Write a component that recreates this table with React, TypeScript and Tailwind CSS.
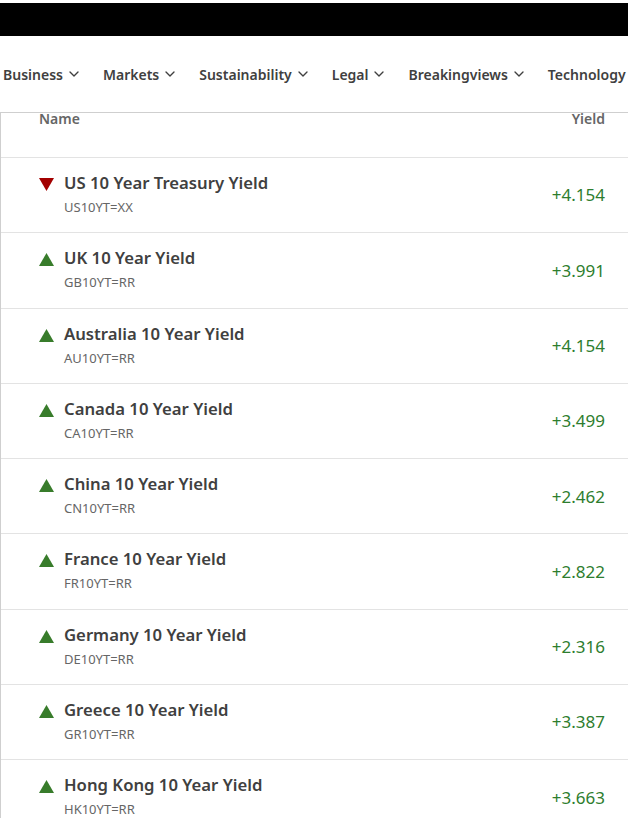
import { ChevronDown } from "lucide-react";

const NAV = ["Business", "Markets", "Sustainability", "Legal", "Breakingviews", "Technology"];

type Row = { name: string; ric: string; yield: string; up: boolean };

const ROWS: Row[] = [
  { name: "US 10 Year Treasury Yield", ric: "US10YT=XX", yield: "+4.154", up: false },
  { name: "UK 10 Year Yield", ric: "GB10YT=RR", yield: "+3.991", up: true },
  { name: "Australia 10 Year Yield", ric: "AU10YT=RR", yield: "+4.154", up: true },
  { name: "Canada 10 Year Yield", ric: "CA10YT=RR", yield: "+3.499", up: true },
  { name: "China 10 Year Yield", ric: "CN10YT=RR", yield: "+2.462", up: true },
  { name: "France 10 Year Yield", ric: "FR10YT=RR", yield: "+2.822", up: true },
  { name: "Germany 10 Year Yield", ric: "DE10YT=RR", yield: "+2.316", up: true },
  { name: "Greece 10 Year Yield", ric: "GR10YT=RR", yield: "+3.387", up: true },
  { name: "Hong Kong 10 Year Yield", ric: "HK10YT=RR", yield: "+3.663", up: true },
];

function Arrow({ up }: { up: boolean }) {
  return (
    <svg width="15" height="13" viewBox="0 0 15 13" className="shrink-0">
      {up ? (
        <polygon points="7.5,0 15,13 0,13" fill="#387c2b" />
      ) : (
        <polygon points="0,0 15,0 7.5,13" fill="#a30000" />
      )}
    </svg>
  );
}

export default function App() {
  return (
    <div
      className="h-[818px] w-[628px] overflow-hidden bg-white text-[#404040]"
      style={{ fontFamily: '"Noto Sans", "Open Sans", sans-serif' }}
    >
      <div className="h-[3px]" />
      <div className="h-[33px] bg-black" />

      <nav className="flex h-[76px] items-center gap-[21px] whitespace-nowrap pl-[3px] text-[14px] font-semibold">
        {NAV.map((n, i) => (
          <span key={n} className="flex items-center gap-[3px]">
            {n}
            {i < NAV.length - 1 && <ChevronDown size={16} strokeWidth={2} />}
          </span>
        ))}
      </nav>

      <div className="border-l border-t border-[#cfcfcf]">
        <div className="flex h-[44px] items-start justify-between pl-[38px] pr-[23px] text-[14px] font-semibold leading-[12px] text-[#666]">
          <span>Name</span>
          <span>Yield</span>
        </div>
        {ROWS.map((r) => (
          <div
            key={r.ric}
            className="flex h-[75.3px] items-center justify-between border-t border-[#e3e3e3] pl-[38px] pr-[23px]"
          >
            <div className="flex items-start gap-[10px] self-start pt-[14px]">
              <div className="pt-[6px]">
                <Arrow up={r.up} />
              </div>
              <div>
                <div className="text-[16.7px] font-semibold leading-[22px]">{r.name}</div>
                <div className="mt-[5px] text-[13px] leading-[16px] text-[#666]">{r.ric}</div>
              </div>
            </div>
            <div className="text-[17px] text-[#2e7d2e]">{r.yield}</div>
          </div>
        ))}
      </div>
    </div>
  );
}
